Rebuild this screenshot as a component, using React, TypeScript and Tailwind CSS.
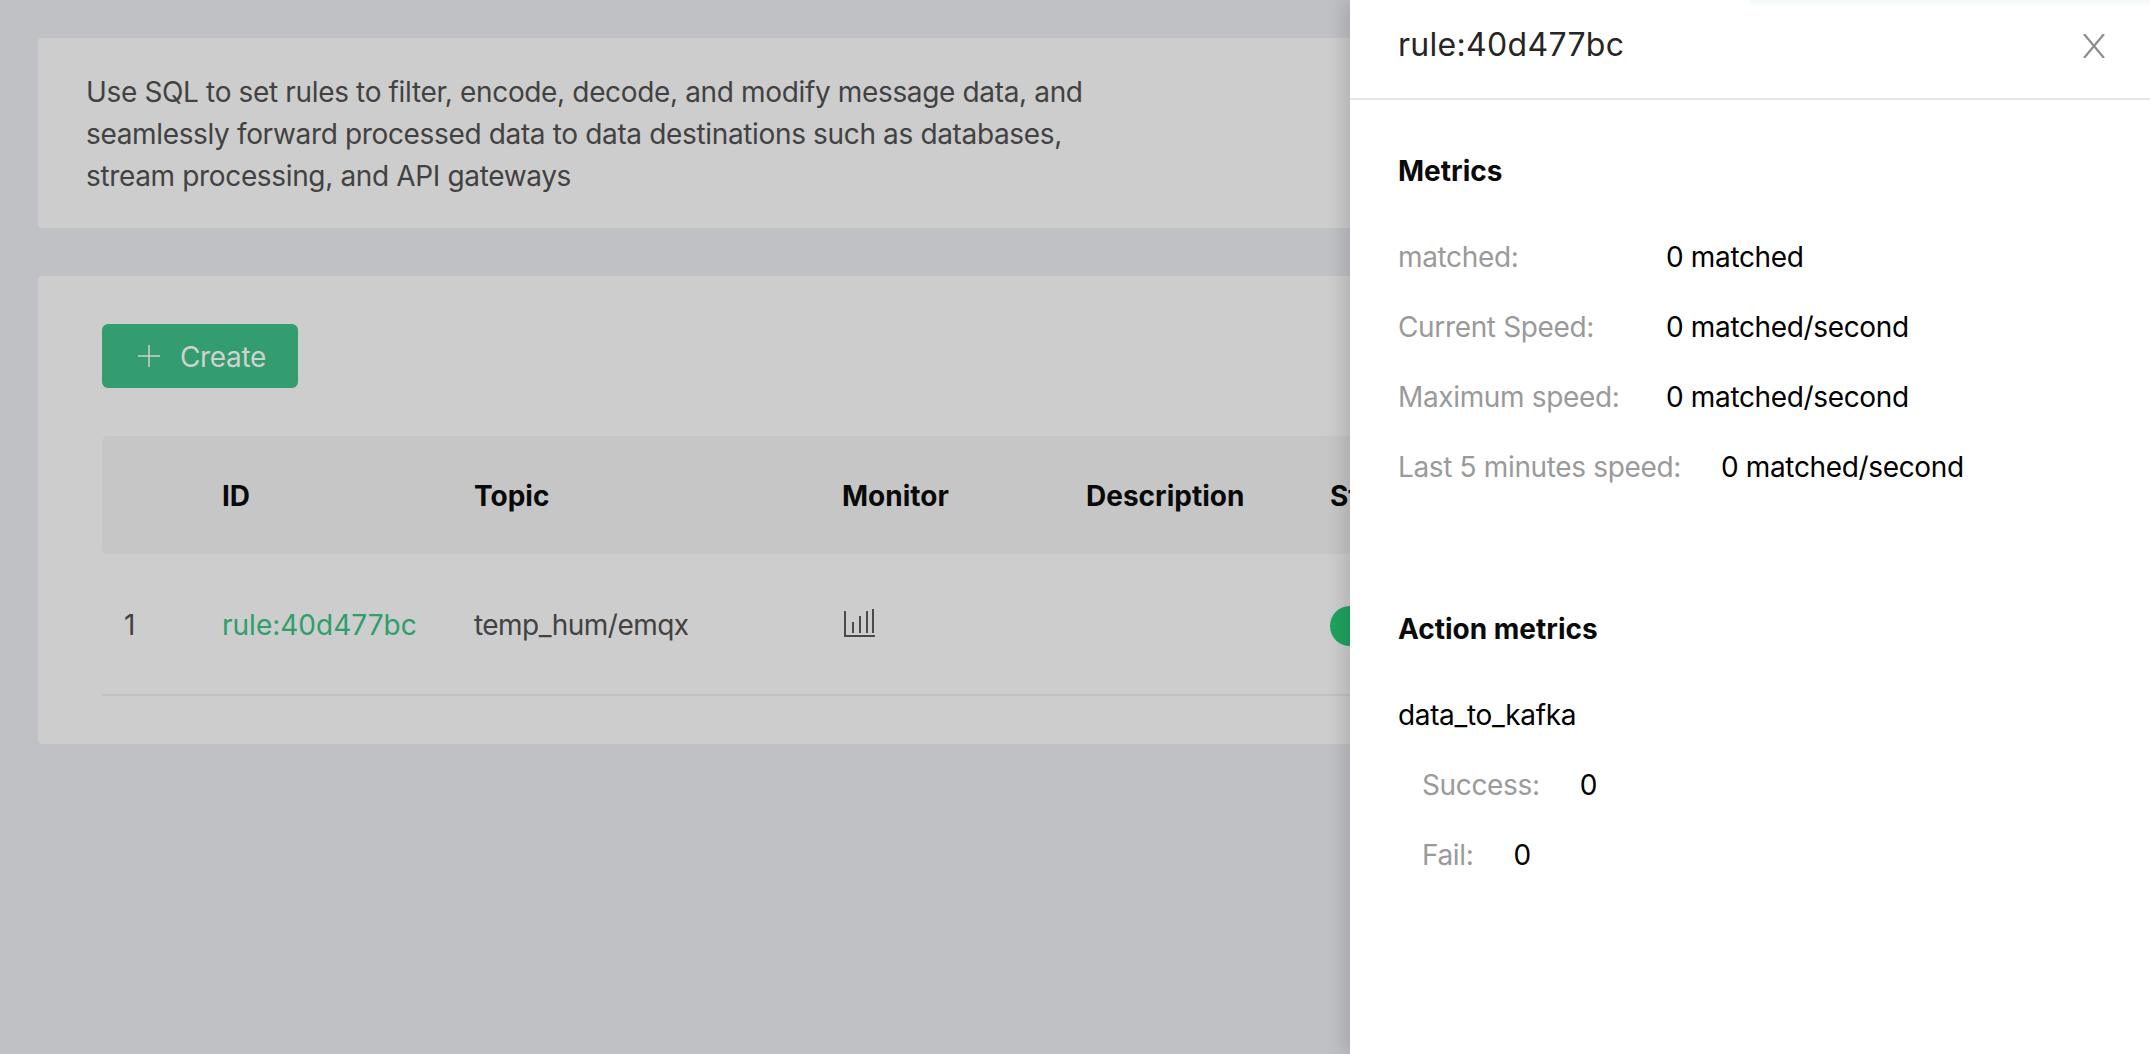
export default function App() {
  const metrics = [
    ["matched:", "0 matched"],
    ["Current Speed:", "0 matched/second"],
    ["Maximum speed:", "0 matched/second"],
    ["Last 5 minutes speed:", "0 matched/second"],
  ];
  const actions = [
    ["Success:", "0"],
    ["Fail:", "0"],
  ];
  return (
    <div className="relative h-[1054px] w-[2150px] overflow-hidden bg-[#c0c1c5] font-['Inter',sans-serif] text-[28px] tracking-[-0.35px]">
      <main className="flex w-[2074px] flex-col gap-12 pl-[38px] pt-[38px] box-content">
        <section className="h-[190px] rounded bg-[#cdcdcd] px-12 pt-[33px] leading-[42px] text-[#424242]">
          <p className="w-[1040px]">
            Use SQL to set rules to filter, encode, decode, and modify message data, and seamlessly forward processed
            data to data destinations such as databases, stream processing, and API gateways
          </p>
        </section>
        <section className="h-[468px] rounded bg-[#cdcdcd] pl-16 pr-12 pt-12">
          <button className="flex h-16 w-[196px] items-center rounded-md bg-[#339d6f] pl-[35px] text-[#cdd2cf]">
            <svg width="24" height="24" viewBox="0 0 24 24" fill="none" stroke="currentColor" strokeWidth="1.5">
              <path d="M12 1v22M1 12h22" />
            </svg>
            <span className="ml-[19px] pt-[2px]">Create</span>
          </button>
          <div className="mt-12 grid h-[118px] grid-cols-[120px_252px_368px_244px_244px_1fr] items-center rounded-md bg-[#c6c6c6] pt-[2px] font-bold tracking-normal text-[#0a0a0a]">
            <span />
            <span>ID</span>
            <span>Topic</span>
            <span>Monitor</span>
            <span>Description</span>
            <span>Status</span>
          </div>
          <div className="grid h-[142px] grid-cols-[120px_252px_368px_244px_244px_1fr] items-center border-b-2 border-[#c0c1c5] pt-[2px] text-[#424242]">
            <span className="pl-[22px]">1</span>
            <span className="tracking-normal text-[#2e9e6b]">rule:40d477bc</span>
            <span className="tracking-[-0.55px]">temp_hum/emqx</span>
            <svg width="34" height="30" viewBox="0 0 34 30" fill="none" stroke="#4a4a4e" strokeWidth="2" className="-mt-[6px]">
              <path d="M3 4v25h30" />
              <path d="M11 15v11M18 9v17M25 4v22M31 2v24" />
            </svg>
            <span />
            <span className="mt-[2px] h-10 w-20 rounded-full bg-[#1fa35f]" />
          </div>
        </section>
      </main>

      <aside className="absolute inset-y-0 right-0 w-[800px] bg-white text-black shadow-[-8px_0_16px_rgba(0,0,0,0.12)]">
        <div className="absolute right-0 top-0 h-1.5 w-[400px] bg-gradient-to-b from-[#f1faf6] to-white" />
        <header className="relative flex h-[100px] items-center justify-between border-b-2 border-[#e6e6e6] pb-[8px] pl-12 pr-[45px]">
          <h2 className="text-[32px] tracking-[0.3px] text-[#262626]">rule:40d477bc</h2>
          <svg width="22" height="24" viewBox="0 0 22 24" fill="none" stroke="#8c8c8c" strokeWidth="2.2" className="mt-[2px]">
            <path d="M1 0l20 24M21 0L1 24" />
          </svg>
        </header>
        <div className="px-12">
          <h3 className="mt-[51px] flex h-10 items-center font-bold tracking-normal text-[#0a0a0a]">Metrics</h3>
          <div className="mt-[31px]">
            {metrics.map(([label, value]) => (
              <div key={label} className="flex h-[70px] items-center">
                <span className="mr-10 min-w-[228px] text-[#9a9a9a]">{label}</span>
                <span>{value}</span>
              </div>
            ))}
          </div>
          <h3 className="mt-[107px] flex h-10 items-center font-bold tracking-normal text-[#0a0a0a]">Action metrics</h3>
          <div className="mt-[31px] flex h-[70px] items-center">data_to_kafka</div>
          {actions.map(([label, value]) => (
            <div key={label} className="flex h-[70px] items-center pl-6">
              <span className="mr-10 text-[#9a9a9a]">{label}</span>
              <span>{value}</span>
            </div>
          ))}
        </div>
      </aside>
    </div>
  );
}
